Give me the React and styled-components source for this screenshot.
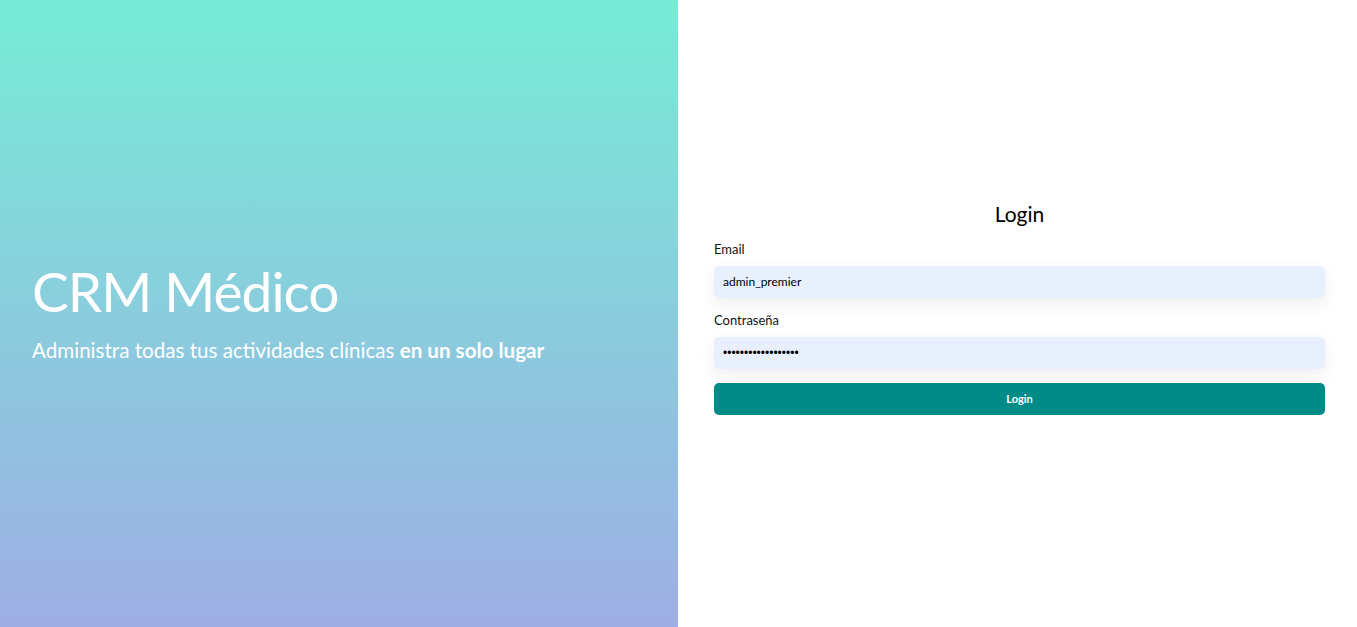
import React from "react";
import styled, { createGlobalStyle } from "styled-components";

const GlobalStyle = createGlobalStyle`
  html, body {
    margin: 0;
    padding: 0;
    height: 100%;
  }
  body {
    font-family: "Lato", "Open Sans", sans-serif;
  }
  #root {
    height: 100%;
  }
`;

const Page = styled.div`
  display: grid;
  grid-template-columns: 678px 1fr;
  height: 627px;
  width: 100%;
`;

const Hero = styled.section`
  display: flex;
  flex-direction: column;
  justify-content: center;
  padding: 0 32px 4px;
  background: linear-gradient(180deg, #76ecd6 0%, #9eaee4 100%);
  color: #fff;

  h1 {
    margin: 0;
    font-size: 55px;
    font-weight: 400;
    letter-spacing: -1px;
    line-height: 1.1;
  }
  p {
    margin: 17px 0 0;
    font-size: 20.6px;
  }
  b {
    font-weight: 700;
  }
`;

const FormSide = styled.section`
  display: flex;
  align-items: center;
  padding: 0 32px 12px 36px;
  background: #fff;
`;

const Form = styled.form`
  width: 100%;
  display: flex;
  flex-direction: column;

  h2 {
    margin: 0 0 15px;
    text-align: center;
    font-size: 21px;
    font-weight: 400;
    color: #000;
  }
`;

const Label = styled.label`
  display: block;
  font-size: 13px;
  color: #111;
  margin-bottom: 9px;
`;

const Input = styled.input`
  display: block;
  box-sizing: border-box;
  width: 100%;
  height: 32px;
  border: none;
  border-radius: 5px;
  background: #e8f0fe;
  padding: 0 9px;
  margin-bottom: 14px;
  font-family: ${(p) => (p.type === "password" ? '"Liberation Sans"' : '"Lato"')}, sans-serif;
  font-size: 12px;
  color: #000;
  box-shadow: 0 6px 18px rgba(0, 0, 0, 0.07);
  outline: none;
`;

const Button = styled.button`
  height: 32px;
  border: none;
  border-radius: 5px;
  background: #008b87;
  color: #fff;
  font-family: "Lato", sans-serif;
  font-size: 11px;
  font-weight: 700;
`;

export default function App() {
  return (
    <>
      <GlobalStyle />
      <Page>
        <Hero>
          <h1>CRM Médico</h1>
          <p>
            Administra todas tus actividades clínicas <b>en un solo lugar</b>
          </p>
        </Hero>
        <FormSide>
          <Form onSubmit={(e) => e.preventDefault()}>
            <h2>Login</h2>
            <Label>Email</Label>
            <Input type="text" defaultValue="admin_premier" />
            <Label>Contraseña</Label>
            <Input type="password" defaultValue="admin_premier_pass" />
            <Button type="submit">Login</Button>
          </Form>
        </FormSide>
      </Page>
    </>
  );
}
